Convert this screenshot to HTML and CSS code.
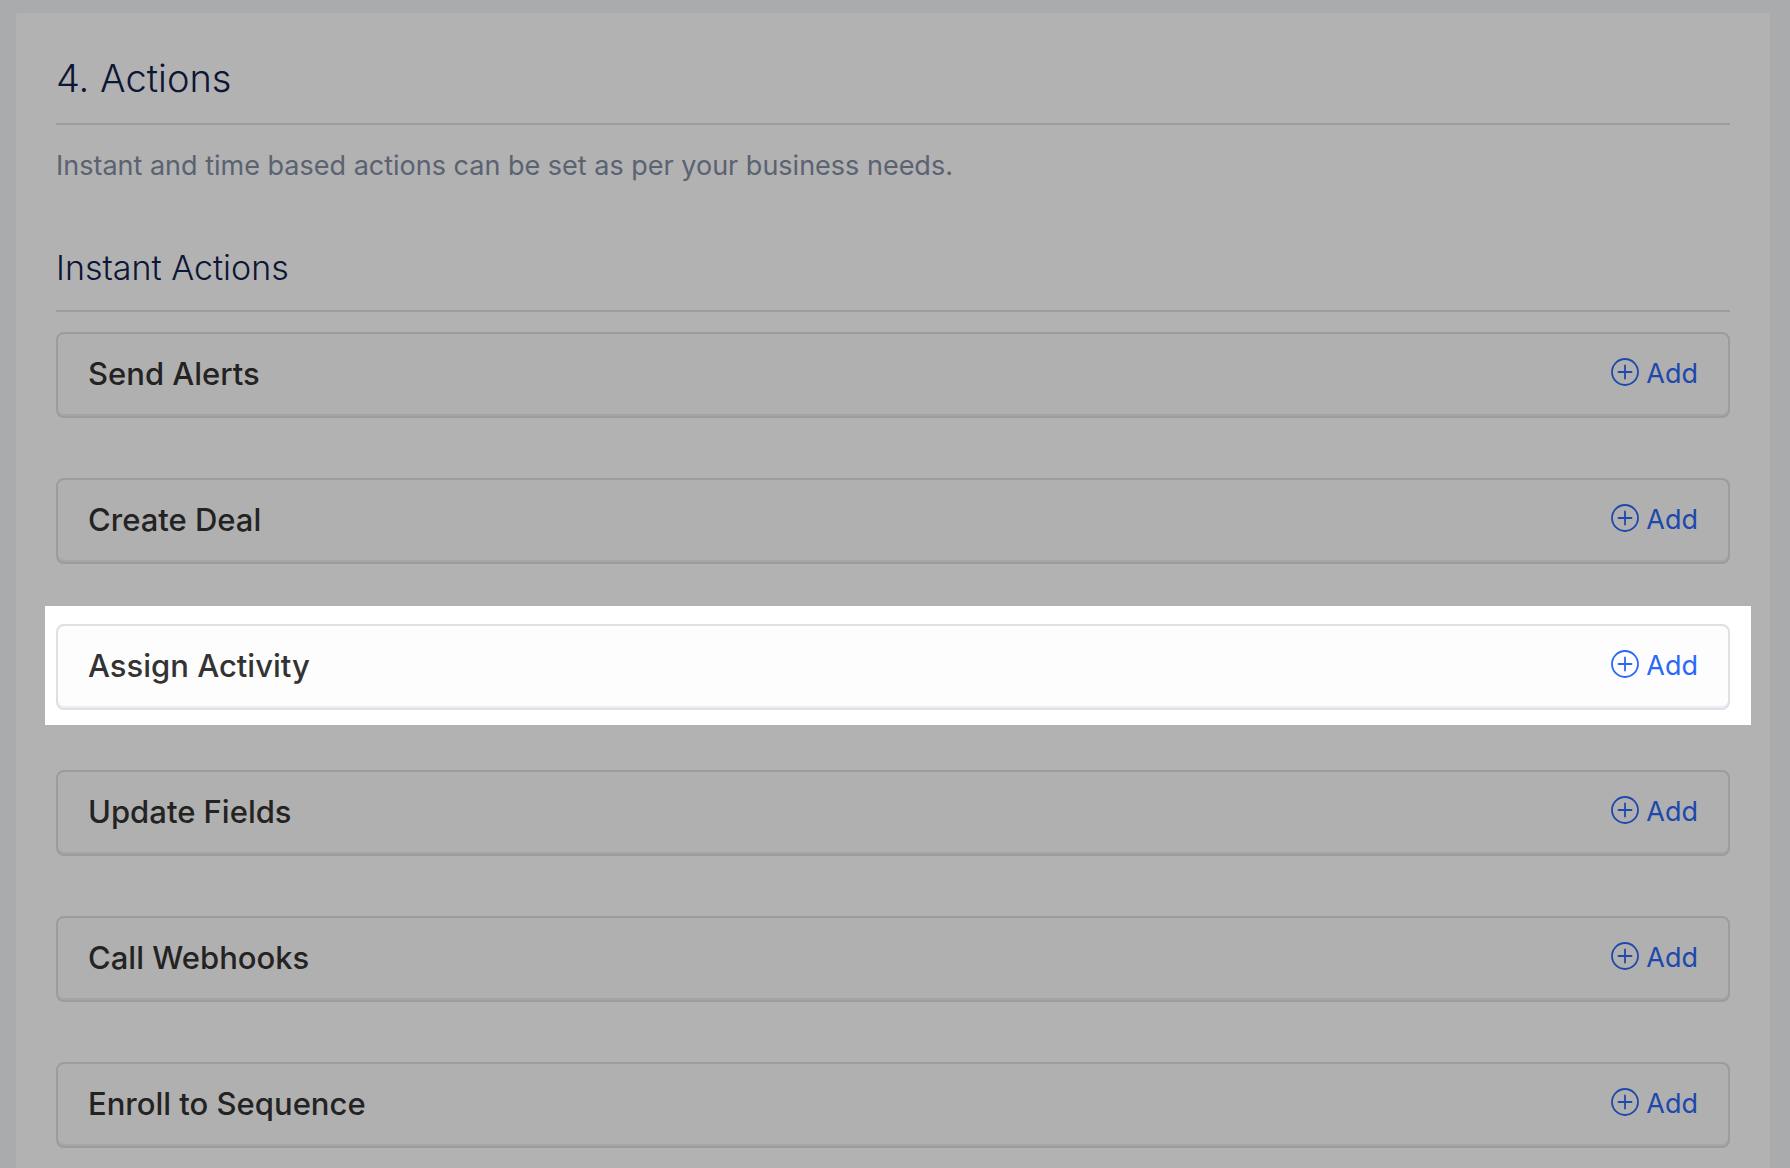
FILE: index.html
```html
<!DOCTYPE html>
<html lang="en">
<head>
  <meta charset="utf-8">
  <title>Actions</title>
  <link rel="stylesheet" href="styles.css">
</head>
<body>
  <svg width="0" height="0" class="sprite">
    <symbol id="plus-circle" viewBox="0 0 28 28">
      <circle cx="14" cy="14" r="13"/>
      <path d="M14 7.5v13M7.5 14h13"/>
    </symbol>
  </svg>
  <main class="panel">
    <h1 class="heading">4. Actions</h1>
    <p class="description">Instant and time based actions can be set as per your business needs.</p>
    <h2 class="heading subheading">Instant Actions</h2>
    <ul class="actions">
      <li class="action">
        <span class="title" id="alerts">Send Alerts</span>
        <button class="add" type="button" aria-describedby="alerts"><svg class="icon"><use href="#plus-circle"/></svg>Add</button>
      </li>
      <li class="action">
        <span class="title" id="deal">Create Deal</span>
        <button class="add" type="button" aria-describedby="deal"><svg class="icon"><use href="#plus-circle"/></svg>Add</button>
      </li>
      <li class="action spotlight">
        <span class="title" id="activity">Assign Activity</span>
        <button class="add" type="button" aria-describedby="activity"><svg class="icon"><use href="#plus-circle"/></svg>Add</button>
      </li>
      <li class="action">
        <span class="title" id="fields">Update Fields</span>
        <button class="add" type="button" aria-describedby="fields"><svg class="icon"><use href="#plus-circle"/></svg>Add</button>
      </li>
      <li class="action">
        <span class="title" id="webhooks">Call Webhooks</span>
        <button class="add" type="button" aria-describedby="webhooks"><svg class="icon"><use href="#plus-circle"/></svg>Add</button>
      </li>
      <li class="action">
        <span class="title" id="sequence">Enroll to Sequence</span>
        <button class="add" type="button" aria-describedby="sequence"><svg class="icon"><use href="#plus-circle"/></svg>Add</button>
      </li>
    </ul>
  </main>
</body>
</html>
```

FILE: styles.css
```css
* { box-sizing: border-box; }
body {
  margin: 0;
  padding: 13px 20px 0 16px;
  background: #f2f5f8;
  font-family: Inter, sans-serif;
  color: #333;
}
.sprite { position: absolute; }
.panel {
  background: #fff;
  border-radius: 2px;
  padding: 40px 40px 20px;
}
.heading {
  margin: 0;
  padding-bottom: 20px;
  border-bottom: 2px solid #dfe0e6;
  color: #12204d;
  font-size: 38px;
  font-weight: 300;
  line-height: 50px;
}
.description {
  margin: 20px 0 58px;
  color: #838da3;
  font-size: 27px;
  line-height: 42px;
}
.subheading {
  font-size: 34px;
  line-height: 45px;
  margin-bottom: 20px;
}
.actions {
  display: flex;
  flex-direction: column;
  gap: 60px;
  margin: 0;
  padding: 0;
  list-style: none;
}
.action {
  display: flex;
  align-items: center;
  justify-content: space-between;
  min-height: 86px;
  padding: 0 30px 2px;
  border: 2px solid #dfe0e6;
  border-radius: 8px;
  background: #fdfdfd;
  box-shadow: inset 0 -2px 0 #ececf1;
}
.title {
  font-size: 31px;
  font-weight: 500;
  line-height: 40px;
}
.add {
  display: flex;
  align-items: center;
  gap: 7px;
  padding: 0;
  border: none;
  background: none;
  color: #2c68f6;
  font: inherit;
  font-size: 27px;
  line-height: 40px;
  cursor: pointer;
}
.icon {
  width: 28px;
  height: 28px;
  margin-bottom: 4px;
  fill: none;
  stroke: currentColor;
  stroke-width: 1.8;
  stroke-linecap: round;
}
/* Dims everything on the page except the row in focus */
.spotlight { position: relative; }
.spotlight::before {
  content: "";
  position: absolute;
  inset: -20px -23px -17px -13px;
  box-shadow: 0 0 0 3000px rgba(0, 0, 0, 0.3);
  pointer-events: none;
}
```
